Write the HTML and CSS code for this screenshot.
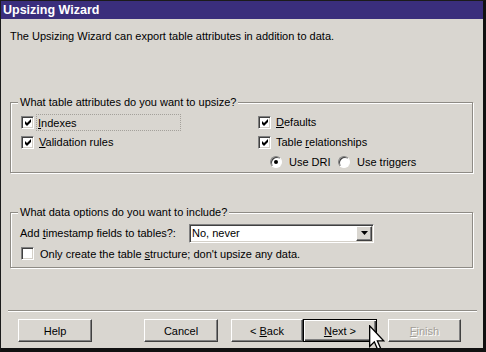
FILE: index.html
```html
<!DOCTYPE html>
<html lang="en">
<head>
    <meta charset="UTF-8">
    <title>Upsizing Wizard</title>
    <link rel="stylesheet" href="styles.css">
</head>
<body>
    <div class="window">
        <div class="titlebar">Upsizing Wizard</div>
        <div class="content">
            <p class="intro">The Upsizing Wizard can export table attributes in addition to data.</p>

            <fieldset class="group group-attrs">
                <legend>What table attributes do you want to upsize?</legend>
                <div class="attr-grid">
                    <div class="col col-left">
                        <div class="option">
                            <span class="check"><svg width="7" height="7" viewBox="0 0 7 7"><path d="M0 2 L2 4 L6 0 L6 3 L2 7 L0 5 Z"/></svg></span>
                            <span class="focus-label"><u>I</u>ndexes</span>
                        </div>
                        <div class="option">
                            <span class="check"><svg width="7" height="7" viewBox="0 0 7 7"><path d="M0 2 L2 4 L6 0 L6 3 L2 7 L0 5 Z"/></svg></span>
                            <span><u>V</u>alidation rules</span>
                        </div>
                    </div>
                    <div class="col col-right">
                        <div class="option">
                            <span class="check"><svg width="7" height="7" viewBox="0 0 7 7"><path d="M0 2 L2 4 L6 0 L6 3 L2 7 L0 5 Z"/></svg></span>
                            <span><u>D</u>efaults</span>
                        </div>
                        <div class="option">
                            <span class="check"><svg width="7" height="7" viewBox="0 0 7 7"><path d="M0 2 L2 4 L6 0 L6 3 L2 7 L0 5 Z"/></svg></span>
                            <span>Table <u>r</u>elationships</span>
                        </div>
                        <div class="option radios">
                            <span class="radio-item first"><span class="radio checked"></span>Use DRI</span>
                            <span class="radio-item"><span class="radio"></span>Use triggers</span>
                        </div>
                    </div>
                </div>
            </fieldset>

            <fieldset class="group group-data">
                <legend>What data options do you want to include?</legend>
                <div class="option row-select">
                    <span class="select-label">Add <u>t</u>imestamp fields to tables?:</span>
                    <div class="select">
                        <span class="select-value">No, never</span>
                        <span class="select-btn"><svg width="7" height="4" viewBox="0 0 7 4"><path d="M0 0 H7 L3.5 4 Z"/></svg></span>
                    </div>
                </div>
                <div class="option row-structure">
                    <span class="check"></span>
                    <span>Only create the table <u>s</u>tructure; don't upsize any data.</span>
                </div>
            </fieldset>

            <div class="separator"></div>

            <div class="buttons">
                <button class="btn btn-help">Help</button>
                <button class="btn btn-cancel">Cancel</button>
                <button class="btn btn-back">&lt; <u>B</u>ack</button>
                <button class="btn btn-next"><u>N</u>ext &gt;</button>
                <button class="btn btn-finish" disabled><u>F</u>inish</button>
            </div>
        </div>

        <svg class="cursor" width="16" height="27" viewBox="0 0 12 20">
            <path d="M0.5 0.5 L0.5 16 L4 12.5 L6.8 19 L9 18 L6.3 11.8 L11 11.8 Z" fill="#fff" stroke="#000" stroke-width="1"/>
        </svg>
    </div>
</body>
</html>
```

FILE: styles.css
```css
body {
    margin: 0;
    font-family: "Liberation Sans", Arial, sans-serif;
    font-size: 11px;
    color: #000;
    background: #fff;
}

.window {
    position: relative;
    width: 486px;
    height: 352px;
    box-sizing: border-box;
    border-left: 1px solid #1b1b1b;
    border-top: 1px solid #1b1b1b;
    border-right: 3px solid #111;
    border-bottom: 4px solid #111;
    background-color: #d9d6d0;
    overflow: hidden;
}

.titlebar {
    height: 18px;
    line-height: 18px;
    padding-left: 2px;
    background-color: #3a2e7c;
    color: #fff;
    font-weight: bold;
    font-size: 12.5px;
}

.content {
    padding: 0 10px 0 9px;
}

.intro {
    margin: 11px 0 0;
    line-height: 13px;
}

/* Group boxes */
.group {
    margin: 0;
    min-width: 0;
    padding: 3px 10px 0 10px;
    border: 1px solid #8e8b85;
    box-shadow: inset 1px 1px 0 #fff, 1px 1px 0 #fff;
}

.group legend {
    padding: 0 2px;
    margin-left: -3px;
    line-height: 13px;
    background-color: #d9d6d0;
}

.group-attrs {
    margin-top: 53px;
}

.group-data {
    margin-top: 33px;
    padding: 3px 10px 4px 10px;
}

.attr-grid {
    display: grid;
    grid-template-columns: 237px 1fr;
}

.option {
    display: flex;
    align-items: center;
    height: 20px;
}

/* Checkbox */
.check {
    display: inline-flex;
    align-items: center;
    justify-content: center;
    width: 13px;
    height: 13px;
    box-sizing: border-box;
    margin-right: 5px;
    background-color: #fff;
    border: 1px solid;
    border-color: #808080 #fff #fff #808080;
    box-shadow: inset 1px 1px 0 #404040, inset -1px -1px 0 #d4d0c8;
    flex-shrink: 0;
}

.check svg {
    fill: #000;
    margin: 1px 0 0 1px;
}

.focus-label {
    margin-left: -3px;
    width: 142px;
    padding: 2px 0 1px 1px;
    border: 1px dotted #a4a19b;
    line-height: 12px;
}

/* Radios */
.radios {
    padding-left: 12px;
}

.radio-item {
    display: inline-flex;
    align-items: center;
}

.radio-item.first {
    width: 68px;
}

.radio {
    position: relative;
    width: 12px;
    height: 12px;
    box-sizing: border-box;
    margin-right: 7px;
    border-radius: 50%;
    background-color: #fff;
    border: 1px solid;
    border-color: #808080 #fff #fff #808080;
    box-shadow: inset 1px 1px 0 #404040;
}

.radio.checked::after {
    content: "";
    position: absolute;
    left: 3px;
    top: 3px;
    width: 4px;
    height: 4px;
    border-radius: 50%;
    background-color: #000;
}

/* Data options */
.row-select {
    height: 22px;
}

.select-label {
    width: 169px;
    margin-left: -1px;
}

.select {
    display: flex;
    align-items: center;
    width: 185px;
    height: 19px;
    box-sizing: border-box;
    background-color: #fff;
    border: 1px solid;
    border-color: #808080 #fff #fff #808080;
    box-shadow: inset 1px 1px 0 #404040, inset -1px -1px 0 #d4d0c8;
}

.select-value {
    padding-left: 2px;
}

.select-btn {
    display: flex;
    align-items: center;
    justify-content: center;
    width: 16px;
    height: 15px;
    box-sizing: border-box;
    margin-left: auto;
    margin-right: 1px;
    background-color: #d9d6d0;
    border: 1px solid;
    border-color: #fff #404040 #404040 #fff;
    box-shadow: inset -1px -1px 0 #808080;
}

.row-structure {
    height: 19px;
}

.row-structure .check {
    margin-right: 6px;
}

/* Bottom bar */
.separator {
    margin: 42px 0 0 -2px;
    width: 469px;
    border-top: 1px solid #8e8b85;
    border-bottom: 1px solid #fff;
}

.buttons {
    display: flex;
    margin-top: 7px;
}

.btn {
    height: 23px;
    box-sizing: border-box;
    padding: 0;
    font-family: "Liberation Sans", Arial, sans-serif;
    font-size: 11px;
    color: #000;
    background-color: #d9d6d0;
    border: 1px solid;
    border-color: #fff #404040 #404040 #fff;
    box-shadow: inset -1px -1px 0 #808080;
}

.btn-help {
    margin-left: 8px;
    width: 74px;
}

.btn-cancel {
    margin-left: 52px;
    width: 74px;
}

.btn-back {
    margin-left: 13px;
    width: 72px;
}

.btn-next {
    width: 74px;
    border: 1px solid #000;
    box-shadow: inset 1px 1px 0 #fff, inset -1px -1px 0 #404040, inset -2px -2px 0 #808080;
}

.btn-finish {
    margin-left: 11px;
    width: 73px;
    color: #a19e98;
    text-shadow: 1px 1px 0 #fff;
}

.cursor {
    position: absolute;
    left: 368px;
    top: 324px;
}
```
